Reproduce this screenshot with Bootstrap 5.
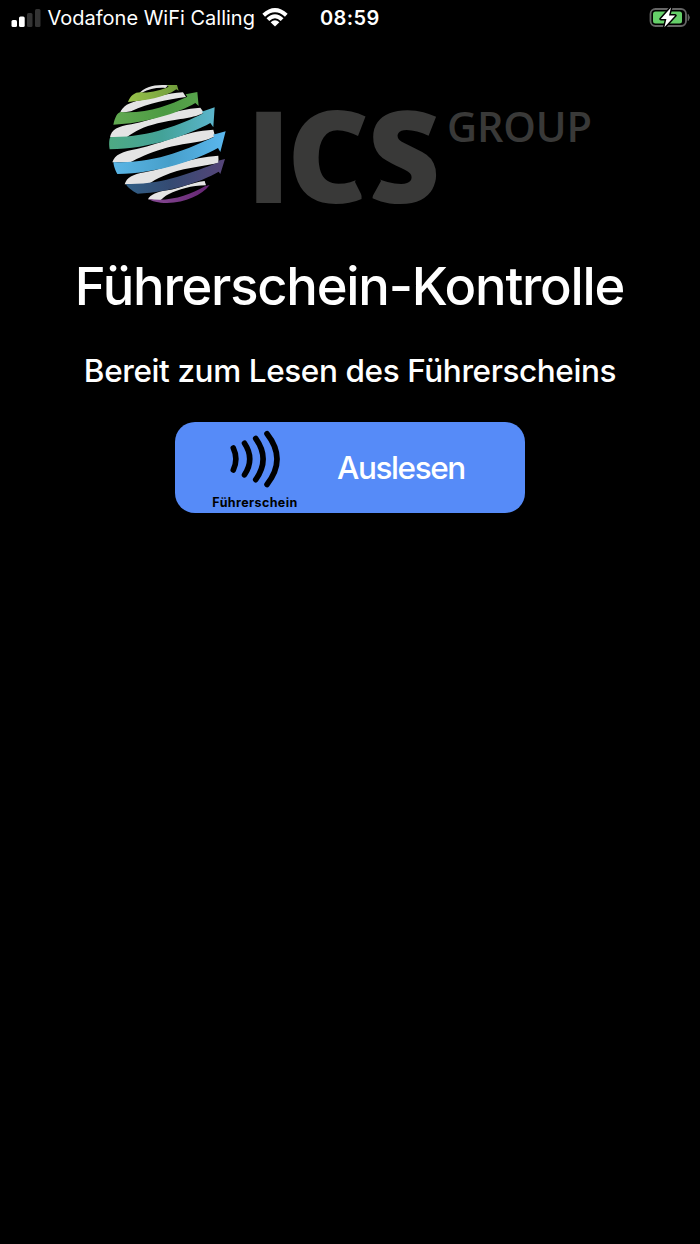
<!DOCTYPE html>
<html lang="de">
<head>
    <meta charset="UTF-8">
    <meta name="viewport" content="width=device-width, initial-scale=1.0">
    <title>Führerschein-Kontrolle</title>
    <!-- Bootstrap CSS -->
    <link href="https://cdn.jsdelivr.net/npm/bootstrap@5.3.0/dist/css/bootstrap.min.css" rel="stylesheet">
    <style>
        body {
            background-color: #000;
            color: #fff;
            font-family: Inter, "Liberation Sans", sans-serif;
        }
        svg {
            display: block;
            flex-shrink: 0;
        }
        .status-bar {
            height: 36px;
            padding: 0 9px 0 11px;
            font-size: 20px;
            line-height: 36px;
            white-space: nowrap;
        }
        .carrier {
            width: 208px;
            margin-left: 6.5px;
            margin-right: 6.5px;
            letter-spacing: 0;
        }
        .clock {
            margin-left: 32px;
            font-weight: 600;
            letter-spacing: 0.4px;
        }
        .brand-logo {
            margin-top: 39px;
            overflow: visible;
        }
        .page-title {
            margin: 39px 0 0;
            font-size: 52.5px;
            font-weight: 500;
            line-height: 64px;
            letter-spacing: -1.22px;
            padding-right: 1px;
            white-space: nowrap;
        }
        .hint {
            margin: 33px 0 0;
            font-size: 31.5px;
            font-weight: 500;
            line-height: 40px;
            letter-spacing: -0.4px;
            white-space: nowrap;
        }
        .btn-read {
            --bs-btn-bg: #568bf8;
            --bs-btn-color: #fff;
            width: 350px;
            height: 91px;
            margin-top: 31px;
            padding: 0 0 0 37px;
            border: 0;
            border-radius: 20px;
            font-size: 31.5px;
            font-weight: 500;
        }
        .licence {
            width: 86px;
            height: 91px;
            padding-top: 8px;
            color: #000;
            font-size: 12.5px;
            font-weight: 700;
            line-height: 17px;
            letter-spacing: 0.4px;
            white-space: nowrap;
        }
        .btn-label {
            margin-left: 39px;
            letter-spacing: -1.4px;
        }
    </style>
</head>
<body>
    <header class="status-bar d-flex align-items-center">
        <svg width="30" height="20" viewBox="0 0 30 20">
            <rect x="0.5" y="12" width="5.5" height="7" rx="1.5" fill="#fff"/>
            <rect x="8" y="8.5" width="5.7" height="10.5" rx="1.5" fill="#fff"/>
            <rect x="16" y="5" width="5.5" height="14" rx="1.5" fill="#333"/>
            <rect x="24" y="1" width="5.5" height="18" rx="1.5" fill="#333"/>
        </svg>
        <span class="carrier">Vodafone WiFi Calling</span>
        <svg width="26" height="20" viewBox="0 0 26 20">
            <g fill="none" stroke="#fff" stroke-width="4">
                <path d="M1.7 7.2 Q13 -3 24.3 7.2"/>
                <path d="M5.9 11.6 Q13 4.9 20.1 11.6"/>
            </g>
            <path d="M13 18.6 L8.6 14.2 Q13 10.4 17.4 14.2 Z" fill="#fff"/>
        </svg>
        <span class="clock">08:59</span>
        <svg class="ms-auto" width="42" height="24" viewBox="0 0 42 24">
            <rect x="1.5" y="3" width="35.5" height="17" rx="5" fill="none" stroke="#656565" stroke-width="1.8"/>
            <path d="M39.2 8.5 Q41.5 11.5 39.2 14.5 Z" fill="#656565" stroke="#656565"/>
            <rect x="4" y="5.5" width="29" height="12" rx="2.5" fill="#65cf69"/>
            <path d="M22 1.5 L11.8 13 H17.4 L15.4 21.3 L26.2 9.5 H20 Z" fill="#fff" stroke="#000" stroke-width="3" paint-order="stroke" stroke-linejoin="round"/>
        </svg>
    </header>

    <main class="d-flex flex-column align-items-center">
        <svg class="brand-logo" width="500" height="140" viewBox="0 0 500 140" role="img">
            <defs>
                <linearGradient id="lime"><stop offset="0" stop-color="#98c24b"/><stop offset="1" stop-color="#709c3b"/></linearGradient>
                <linearGradient id="green"><stop offset="0" stop-color="#61a951"/><stop offset=".6" stop-color="#4d9b43"/><stop offset="1" stop-color="#57a34b"/></linearGradient>
                <linearGradient id="teal"><stop offset="0" stop-color="#4eaa83"/><stop offset=".5" stop-color="#43a298"/><stop offset="1" stop-color="#5bb5cc"/></linearGradient>
                <linearGradient id="sky"><stop offset="0" stop-color="#5ab5e5"/><stop offset=".5" stop-color="#479fca"/><stop offset="1" stop-color="#5ab7ee"/></linearGradient>
                <linearGradient id="navy"><stop offset="0" stop-color="#315f86"/><stop offset=".45" stop-color="#344a72"/><stop offset="1" stop-color="#564579"/></linearGradient>
                <linearGradient id="purple"><stop offset="0" stop-color="#874b94"/><stop offset="1" stop-color="#642472"/></linearGradient>
            </defs>
            <!-- globe -->
            <g transform="scale(.3333)">
                <g fill="#e4e4e4">
                    <path d="M117 56 C132 36 168 26 205 31 L196 39 C168 37 148 43 125 53 Z"/>
                    <path d="M60 114 C68 94 86 82 122 76 C162 69 200 55 249 52 L258 66 C198 75 150 82 93 109 Z"/>
                    <path d="M30 187 C34 165 54 153 94 148 C159 135 220 103 301 98 L312 113 C268 134 236 129 173 145 C130 156 106 168 80 187 Z"/>
                    <path d="M37 262 C44 239 68 229 110 222 C195 203 252 169 340 164 L345 184 C300 207 260 201 190 221 C142 235 115 249 91 262 Z"/>
                    <path d="M74 328 C80 308 98 298 134 292 C213 276 272 247 355 242 L356 264 C300 276 244 278 190 303 C170 311 158 319 144 328 Z"/>
                    <path d="M144 373 C151 359 172 350 202 346 C242 340 271 323 314 318 L318 331 C275 331 235 344 207 357 C194 363 188 370 180 377 Z"/>
                </g>
                <path fill="url(#lime)" d="M84 81 C91 62 104 52 121 52 C151 54 182 46 206 35 L201 30 L231 30 L236 47 L229 43 C195 68 135 77 84 81 Z"/>
                <path fill="url(#green)" d="M40 149 C45 127 52 111 64 111 C141 116 208 90 262 65 L257 58 L292 51 L296 93 L286 84 C235 115 130 146 40 149 Z"/>
                <path fill="url(#teal)" d="M29 223 C26 205 28 187 32 186 C146 188 240 150 310 115 L305 110 L344 97 L340 157 L331 144 C270 178 150 222 29 223 Z"/>
                <path fill="url(#sky)" d="M52 297 C43 282 39 262 41 261 C163 267 265 221 343 185 L339 179 L377 169 L361 231 L354 219 C290 255 175 295 52 297 Z"/>
                <path fill="url(#navy)" d="M113 356 C94 347 80 333 77 327 C184 331 276 292 357 262 L354 257 L375 252 L361 297 L356 290 C300 322 215 350 113 356 Z"/>
                <path fill="url(#purple)" d="M201 384 C175 384 154 378 146 372 C211 381 267 361 315 334 L329 330 C306 360 257 383 201 384 Z"/>
            </g>
            <g fill="#393938" font-family="Open Sans">
                <text y="127.5" font-size="127" font-weight="800" x="146.5 187 267">ICS</text>
                <text y="66.5" x="347" font-size="41.5" font-weight="600" textLength="145" lengthAdjust="spacing">GROUP</text>
            </g>
            <!-- slanted ends of the C and the S -->
            <path d="M258 98 L255 107 L264.5 126 L268 126 L268 98 Z M277 98 L281 106 L270.5 125 L268 125 L268 98 Z"/>
        </svg>

        <h1 class="page-title">Führerschein-Kontrolle</h1>
        <p class="hint">Bereit zum Lesen des Führerscheins</p>

        <button type="button" class="btn btn-read d-flex align-items-center">
            <span class="licence d-flex flex-column align-items-center">
                <svg width="86" height="64" viewBox="0 0 86 64">
                    <g fill="none" stroke="#000" stroke-width="5.6" stroke-linecap="round">
                        <path d="M21.3 18 Q26.5 29 21.3 40"/>
                        <path d="M32.5 13.3 Q43 29 32.5 44.8"/>
                        <path d="M43.7 8.5 Q58.5 29 43.7 49.7"/>
                        <path d="M55 3.7 Q75 29 55 54.5"/>
                    </g>
                </svg>
                <span>Führerschein</span>
            </span>
            <span class="btn-label">Auslesen</span>
        </button>
    </main>

    <!-- Bootstrap Bundle with Popper -->
    <script src="https://cdn.jsdelivr.net/npm/bootstrap@5.3.0/dist/js/bootstrap.bundle.min.js"></script>
</body>
</html>
